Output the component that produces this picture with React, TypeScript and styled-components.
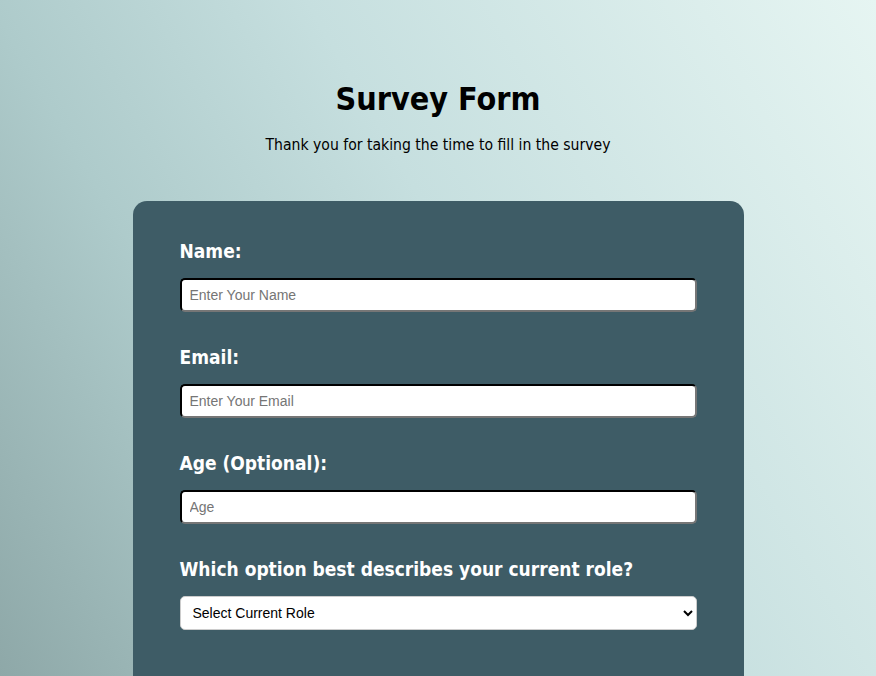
import React from 'react';
import styled, { createGlobalStyle } from 'styled-components';

const GlobalStyle = createGlobalStyle`
  * {
    box-sizing: border-box;
  }
  body {
    margin: 0;
    font-family: 'DejaVu Sans Condensed', 'DejaVu Sans', Tahoma, sans-serif;
    background: linear-gradient(60deg, #8ea8a8 0%, #aecbcb 30%, #c6dfdf 55%, #e6f5f2 100%);
    background-attachment: fixed;
    min-height: 100vh;
  }
`;

const FIELDS = [
  { id: 'name', label: 'Name:', type: 'text', placeholder: 'Enter Your Name' },
  { id: 'email', label: 'Email:', type: 'email', placeholder: 'Enter Your Email' },
  { id: 'age', label: 'Age (Optional):', type: 'number', placeholder: 'Age' },
];

const App = () => {
  return (
    <>
      <GlobalStyle />
      <Page>
        <Header>
          <Title>Survey Form</Title>
          <Description>Thank you for taking the time to fill in the survey</Description>
        </Header>
        <Form>
          {FIELDS.map(({ id, label, type, placeholder }) => (
            <Group key={id}>
              <Label htmlFor={id}>{label}</Label>
              <Input id={id} type={type} placeholder={placeholder} />
            </Group>
          ))}
          <Group>
            <Label htmlFor="role">Which option best describes your current role?</Label>
            <Select id="role" defaultValue="">
              <option value="" disabled>
                Select Current Role
              </option>
              <option value="student">Student</option>
              <option value="job">Full Time Job</option>
              <option value="learner">Full Time Learner</option>
              <option value="other">Other</option>
            </Select>
          </Group>
        </Form>
      </Page>
    </>
  );
};

export default App;

const Page = styled.main`
  display: flex;
  flex-direction: column;
  align-items: center;
  padding: 79px 0 40px;
`;

const Header = styled.header`
  display: flex;
  flex-direction: column;
  align-items: center;
  color: #000;
`;

const Title = styled.h1`
  margin: 0;
  font-size: 32px;
  line-height: 40px;
  font-weight: bold;
`;

const Description = styled.p`
  margin: 16px 0 0;
  font-size: 15.6px;
  line-height: 20px;
`;

const Form = styled.form`
  margin-top: 46px;
  width: 611px;
  background-color: #3e5c66;
  border-radius: 14px;
  padding: 38px 47px 120px;
  display: flex;
  flex-direction: column;
  gap: 33px;
`;

const Group = styled.div`
  display: flex;
  flex-direction: column;
  gap: 15px;
`;

const Label = styled.label`
  color: #fff;
  font-size: 19px;
  line-height: 24px;
  font-weight: bold;
`;

const Input = styled.input`
  height: 34px;
  width: 100%;
  border-radius: 5px;
  border: 2px inset #767676;
  border-top-color: #1e1e1e;
  border-left-color: #1e1e1e;
  padding: 0 8px;
  font-family: 'Liberation Sans', Arial, sans-serif;
  font-size: 14px;
  background: #fff;

  &::placeholder {
    color: #757575;
  }
`;

const Select = styled.select`
  height: 34px;
  width: 100%;
  border-radius: 5px;
  border: 1px solid #cccccc;
  padding: 0 8px;
  font-family: 'Liberation Sans', Arial, sans-serif;
  font-size: 14px;
  color: #000;
  background: #fff;
`;
